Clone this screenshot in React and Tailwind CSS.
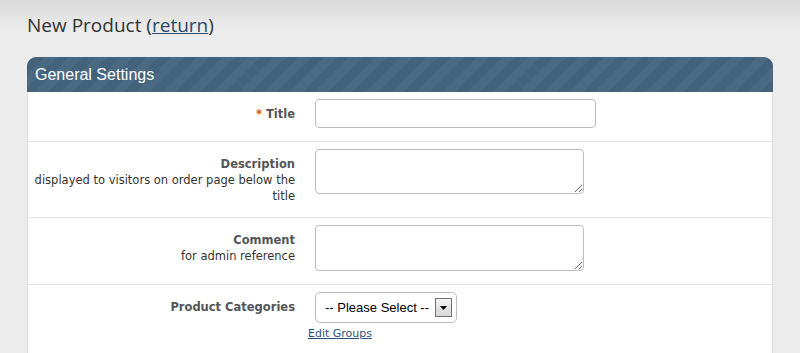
import React from 'react';

const labelFont = { fontFamily: 'Tahoma, "DejaVu Sans", Verdana, sans-serif' };

const FieldRow = ({ label, hint, required, children, last }) => (
  <div className={`flex pt-[7px] pb-[13px] ${last ? '' : 'border-b border-[#e6e6e6]'}`}>
    <div className="w-[267px] shrink-0 pl-[6px] pt-[7px] text-right text-[11.5px] leading-[16px] text-[#333]" style={labelFont}>
      <div className="font-bold text-[#555]">
        {required && <span className="text-[#d9531e] mr-[4px]">*</span>}
        {label}
      </div>
      {hint && <div>{hint}</div>}
    </div>
    <div className="ml-[20px]">{children}</div>
  </div>
);

const App = () => {
  return (
    <div className="min-h-screen bg-gradient-to-b from-[#d9d9d9] to-[#ececec] to-[30px] bg-[#ececec] px-[27px] pt-[10px]">
      <h1 className="text-[19px] leading-[30px] text-[#333]" style={{ fontFamily: '"Open Sans", "Noto Sans", sans-serif' }}>
        New Product (<a href="#" className="underline text-[#2b4a68]">return</a>)
      </h1>

      <div className="mt-[17px] w-[746px]">
        {/* panel header */}
        <div
          className="h-[35px] rounded-t-[9px] px-[8px] flex items-center text-white text-[16px] bg-[#44647e] bg-[repeating-linear-gradient(-45deg,#43637d_0px,#43637d_9px,#4a6a84_9px,#4a6a84_18px)]"
          style={{ fontFamily: '"Liberation Sans", Arial, sans-serif' }}
        >
          General Settings
        </div>

        {/* panel body */}
        <div className="bg-white border-x border-[#dcdcdc]">
          <FieldRow label="Title" required>
            <input type="text" className="w-[281px] h-[29px] rounded-[4px] border border-[#bdbdbd] bg-white" />
          </FieldRow>

          <FieldRow label="Description" hint="displayed to visitors on order page below the title">
            <textarea className="block w-[269px] h-[45px] rounded-[4px] border border-[#bdbdbd] bg-white" />
          </FieldRow>

          <FieldRow label="Comment" hint="for admin reference">
            <textarea className="block w-[269px] h-[46px] rounded-[4px] border border-[#bdbdbd] bg-white" />
          </FieldRow>

          <FieldRow label="Product Categories" last>
            <div className="flex w-[142px] h-[31px] items-center justify-between rounded-[5px] border border-[#bdbdbd] bg-white pl-[9px] pr-[4px]">
              <span className="whitespace-nowrap text-[13px] text-black" style={{ fontFamily: '"Liberation Sans", Arial, sans-serif' }}>
                -- Please Select --
              </span>
              <span className="flex shrink-0 w-[17px] h-[19px] items-center justify-center border border-[#707070] bg-gradient-to-b from-[#f4f4f4] to-[#d6d6d6]">
                <svg width="7" height="4" viewBox="0 0 7 4">
                  <path d="M0 0h7L3.5 4z" fill="#000" />
                </svg>
              </span>
            </div>
            <a href="#" className="block -ml-[7px] mt-[3px] text-[11px] leading-[16px] underline text-[#2d5278]" style={labelFont}>
              Edit Groups
            </a>
          </FieldRow>
        </div>
      </div>
    </div>
  );
};

export default App;
